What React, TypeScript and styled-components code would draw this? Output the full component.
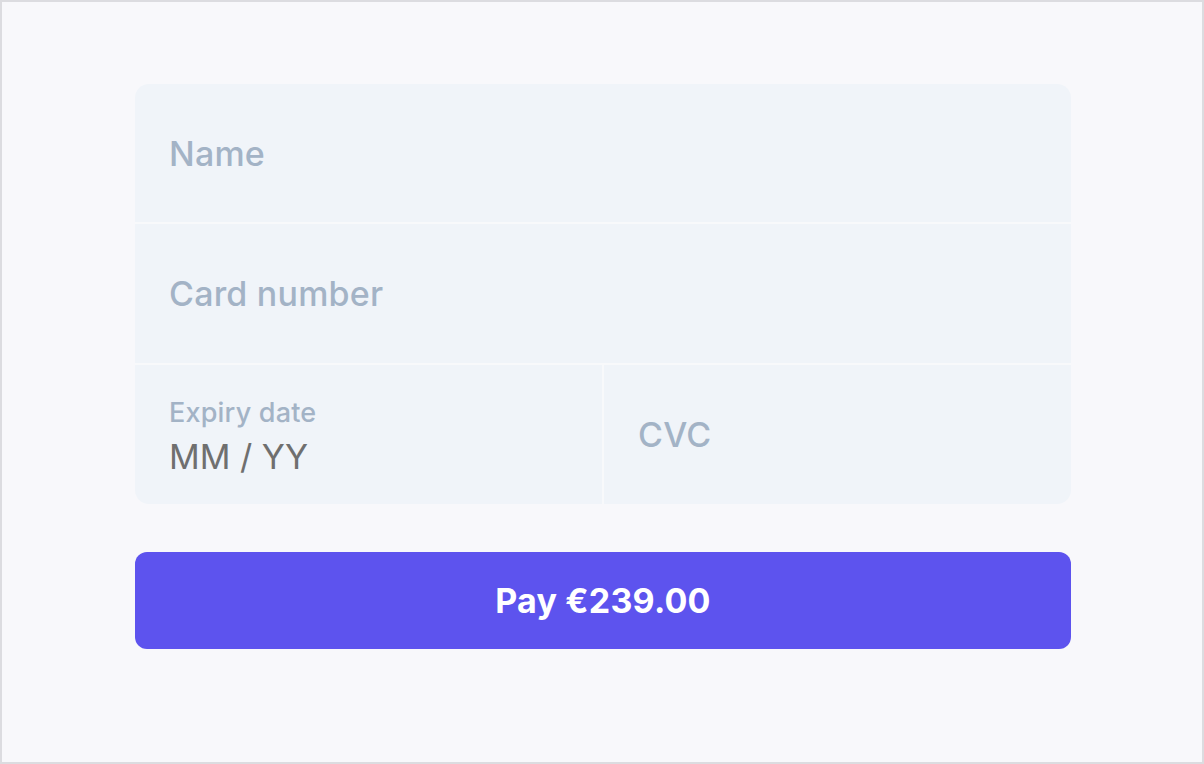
import styled, { createGlobalStyle } from 'styled-components';

const GlobalStyle = createGlobalStyle`
  * {
    box-sizing: border-box;
  }
  body {
    margin: 0;
    font-family: Inter, "Noto Sans", sans-serif;
    background: #f8f8fb;
  }
`;

const Frame = styled.main`
  width: 1204px;
  height: 764px;
  border: 2px solid #dcdce0;
  background: #f8f8fb;
  padding: 82px 131px 0 133px;
  display: flex;
  flex-direction: column;
  gap: 48px;
`;

const CardForm = styled.div`
  display: grid;
  grid-template-columns: 1fr 1fr;
  grid-template-rows: 138px 139px 139px;
  gap: 2px;
  border-radius: 14px;
  overflow: hidden;
  background: #f8f9fb;
`;

const Field = styled.div<{ $full?: boolean }>`
  grid-column: ${(p) => (p.$full ? '1 / span 2' : 'auto')};
  background: #f0f4f9;
  display: flex;
  flex-direction: column;
  justify-content: center;
  padding: 0 34px;
`;

const Placeholder = styled.span`
  font-size: 34px;
  font-weight: 500;
  color: #a3b3c6;
  letter-spacing: 0.2px;
`;

const Label = styled.span`
  font-size: 27px;
  font-weight: 500;
  color: #a3b3c6;
  letter-spacing: 0.2px;
  margin-top: 4px;
  margin-bottom: 7px;
`;

const Value = styled.span`
  font-size: 34px;
  font-weight: 400;
  color: #6f6f6f;
`;

const PayButton = styled.button`
  height: 97px;
  border: none;
  border-radius: 12px;
  background: #5d53ee;
  color: #ffffff;
  font-family: Inter, "Noto Sans", sans-serif;
  font-size: 34px;
  font-weight: 700;
  letter-spacing: 0.2px;
  cursor: pointer;
`;

export default function App() {
  return (
    <>
      <GlobalStyle />
      <Frame>
        <CardForm>
          <Field $full>
            <Placeholder>Name</Placeholder>
          </Field>
          <Field $full>
            <Placeholder>Card number</Placeholder>
          </Field>
          <Field>
            <Label>Expiry date</Label>
            <Value>MM / YY</Value>
          </Field>
          <Field>
            <Placeholder>CVC</Placeholder>
          </Field>
        </CardForm>
        <PayButton>Pay €239.00</PayButton>
      </Frame>
    </>
  );
}
